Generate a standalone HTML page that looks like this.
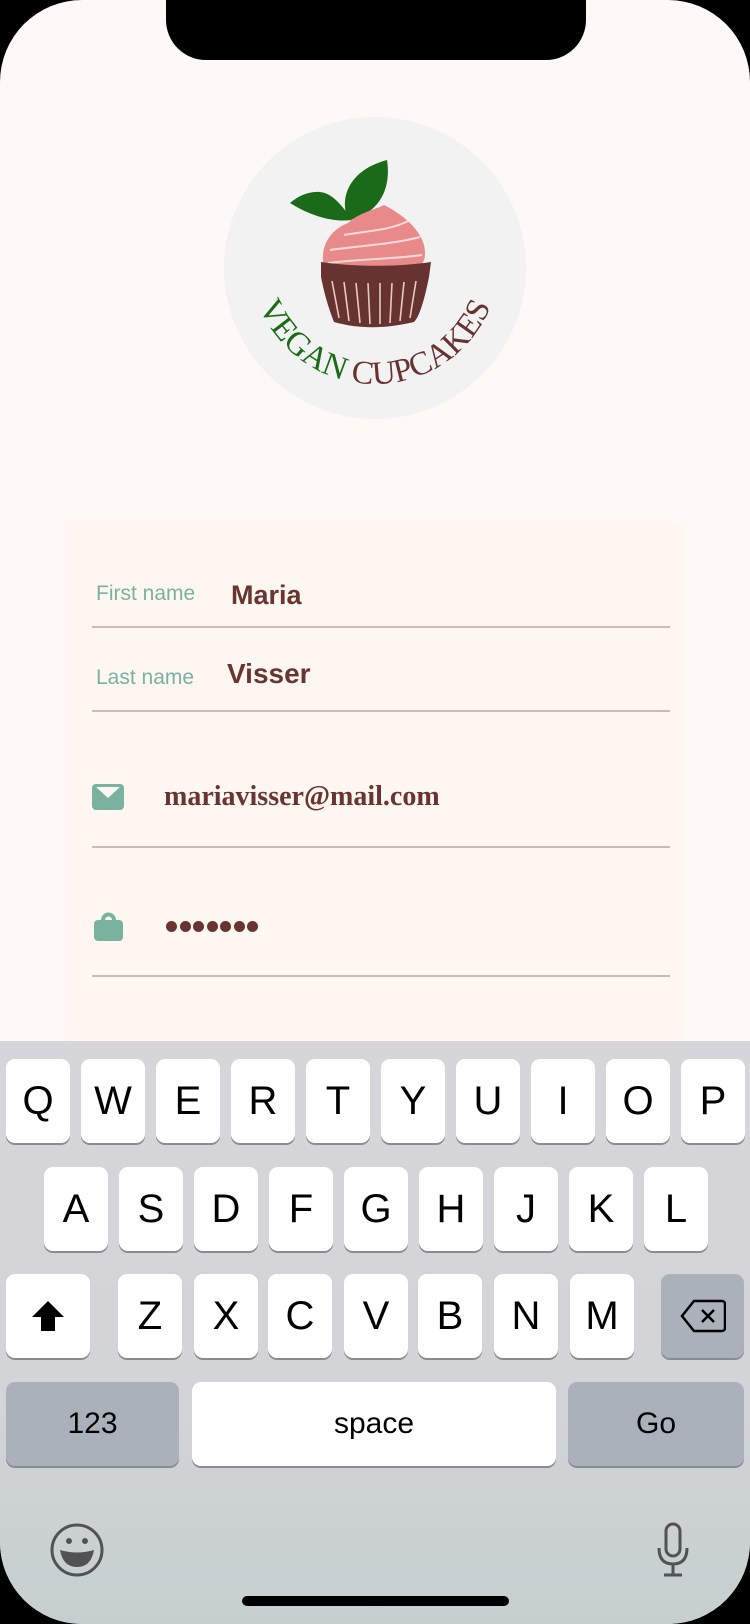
<!DOCTYPE html>
<html><head><meta charset="utf-8"><style>
*{margin:0;padding:0;box-sizing:border-box}
body{width:750px;height:1624px;background:#000;overflow:hidden;font-family:"Liberation Sans",sans-serif;position:relative}
.screen{position:absolute;left:0;top:0;width:750px;height:1624px;background:#fef9f6;border-radius:82px;overflow:hidden}
.notch{position:absolute;left:166px;top:-2px;width:420px;height:62px;background:#000;border-radius:0 0 40px 40px}
.card{position:absolute;left:67px;top:523px;width:617px;height:520px;background:#fdf6f1}
.line{position:absolute;left:92px;width:578px;height:2px;background:#d2b8b3}
.lbl{position:absolute;color:#79b3a0;font-size:21px}
.val{position:absolute;color:#6a3530;font-weight:bold}
.kb{position:absolute;left:0;top:1041px;width:750px;height:583px;background:linear-gradient(#d6d5da 0%,#d3d4d8 60%,#c6cfcf 100%)}
.k{position:absolute;width:64px;height:84px;background:#fff;border-radius:9px;box-shadow:0 2px 0 #8a8b8f;font-size:40px;color:#000;display:flex;align-items:center;justify-content:center}
.g{background:#abb1bb}
.dots{position:absolute;left:166px;top:921px;display:flex;gap:2.5px}
.dot{width:11px;height:11px;border-radius:50%;background:#6a3530;flex:none}
</style></head><body>
<div class="screen">
<div class="notch"></div>
<svg style="position:absolute;left:224px;top:117px" width="302" height="302" viewBox="0 0 302 302">
<circle cx="151" cy="151" r="151" fill="#f2f2f2"/>
<path d="M128 103 C118 88 108 76 96 75 C85 74 74 79 66 86 C82 96 105 106 128 103Z" fill="#1b6a1a"/>
<path d="M124 103 C114 78 128 52 163 43 C168 75 152 98 124 103Z" fill="#1b6a1a"/>
<path d="M100 150 C95 128 108 112 124 106 C134 96 150 93 160 88 C176 96 195 110 200 128 C203 142 199 149 191 151 C160 156 130 156 100 150Z" fill="#e8898a"/>
<path d="M120 118 C140 114 165 114 184 104 M106 133 C135 129 170 127 196 120 M104 146 C135 142 170 142 198 138" stroke="#f8dada" stroke-width="2" fill="none"/>
<path d="M97 145 C130 150 175 150 207 145 L205 160 C200 185 195 200 190 205 C160 212 135 212 110 205 C104 190 100 175 97 160Z" fill="#663330"/>
<path d="M108 164 L115 201 M120 165 L125 204 M132 166 L136 206 M144 166 L146 207 M156 166 L156 207 M168 166 L166 206 M180 165 L176 204 M192 164 L186 201" stroke="#e9c9c4" stroke-width="1.6"/>
<defs><path id="arc" d="M26 142 A125 125 0 0 0 276 142"/></defs>
<text font-family="Liberation Serif,serif" font-size="33" text-anchor="middle"><textPath href="#arc" startOffset="50%"><tspan fill="#1b6a1a">VEGAN </tspan><tspan fill="#663330">CUPCAKES</tspan></textPath></text>
</svg>
<div class="card"></div>
<div class="lbl" style="left:96px;top:582px">First name</div>
<div class="val" style="left:231px;top:580px;font-size:27px">Maria</div>
<div class="line" style="top:626px"></div>
<div class="lbl" style="left:96px;top:666px">Last name</div>
<div class="val" style="left:227px;top:658px;font-size:28px">Visser</div>
<div class="line" style="top:710px"></div>
<svg style="position:absolute;left:92px;top:784px" width="32" height="26"><rect width="32" height="26" rx="4" fill="#79b3a0"/><path d="M4 3 L16 14 L28 3Z" fill="#fdf6f1"/></svg>
<div class="val" style="left:164px;top:781px;font-size:28px;font-family:'Liberation Serif',serif">mariavisser@mail.com</div>
<div class="line" style="top:846px"></div>
<svg style="position:absolute;left:94px;top:912px" width="29" height="29"><path d="M9 8 A5.5 5.5 0 0 1 20 8" stroke="#79b3a0" stroke-width="4" fill="none"/><rect y="8" width="29" height="21" rx="4" fill="#79b3a0"/></svg>
<div class="dots"><div class="dot"></div><div class="dot"></div><div class="dot"></div><div class="dot"></div><div class="dot"></div><div class="dot"></div><div class="dot"></div></div>
<div class="line" style="top:975px"></div>
<div class="kb">
<div class="k" style="left:6px;top:18px">Q</div><div class="k" style="left:81px;top:18px">W</div><div class="k" style="left:156px;top:18px">E</div><div class="k" style="left:231px;top:18px">R</div><div class="k" style="left:306px;top:18px">T</div><div class="k" style="left:381px;top:18px">Y</div><div class="k" style="left:456px;top:18px">U</div><div class="k" style="left:531px;top:18px">I</div><div class="k" style="left:606px;top:18px">O</div><div class="k" style="left:681px;top:18px">P</div>
<div class="k" style="left:44px;top:126px">A</div><div class="k" style="left:119px;top:126px">S</div><div class="k" style="left:194px;top:126px">D</div><div class="k" style="left:269px;top:126px">F</div><div class="k" style="left:344px;top:126px">G</div><div class="k" style="left:419px;top:126px">H</div><div class="k" style="left:494px;top:126px">J</div><div class="k" style="left:569px;top:126px">K</div><div class="k" style="left:644px;top:126px">L</div>
<div class="k" style="left:6px;top:233px;width:84px"><svg width="36" height="34"><path d="M18 2 L34 18 H25 V32 H11 V18 H2Z" fill="#000"/></svg></div>
<div class="k" style="left:118px;top:233px">Z</div><div class="k" style="left:194px;top:233px">X</div><div class="k" style="left:268px;top:233px">C</div><div class="k" style="left:344px;top:233px">V</div><div class="k" style="left:418px;top:233px">B</div><div class="k" style="left:494px;top:233px">N</div><div class="k" style="left:570px;top:233px">M</div>
<div class="k g" style="left:661px;top:233px;width:83px"><svg width="46" height="34"><path d="M14 2 H42 A3 3 0 0 1 45 5 V29 A3 3 0 0 1 42 32 H14 L2 17Z" fill="none" stroke="#000" stroke-width="2.5"/><path d="M22 11 L34 23 M34 11 L22 23" stroke="#000" stroke-width="2.5"/></svg></div>
<div class="k g" style="left:6px;top:341px;width:173px;font-size:30px">123</div>
<div class="k" style="left:192px;top:341px;width:364px;font-size:30px">space</div>
<div class="k g" style="left:568px;top:341px;width:176px;font-size:30px">Go</div>
<svg style="position:absolute;left:49px;top:481px" width="56" height="56"><circle cx="28" cy="28" r="25" fill="none" stroke="#505256" stroke-width="3"/><circle cx="20" cy="19" r="3" fill="#505256"/><circle cx="36" cy="19" r="3" fill="#505256"/><path d="M11 28 Q28 33 45 28 Q42 45 28 45 Q14 45 11 28Z" fill="#505256"/></svg>
<svg style="position:absolute;left:656px;top:481px" width="36" height="56"><rect x="10" y="2" width="14" height="32" rx="7" fill="none" stroke="#505256" stroke-width="3"/><path d="M3 26 Q3 42 17 42 Q31 42 31 26 M17 42 V52 M8 53 H26" fill="none" stroke="#505256" stroke-width="3"/></svg>
<div style="position:absolute;left:242px;top:555px;width:267px;height:10px;border-radius:5px;background:#000"></div>
</div>
</div>
</body></html>
